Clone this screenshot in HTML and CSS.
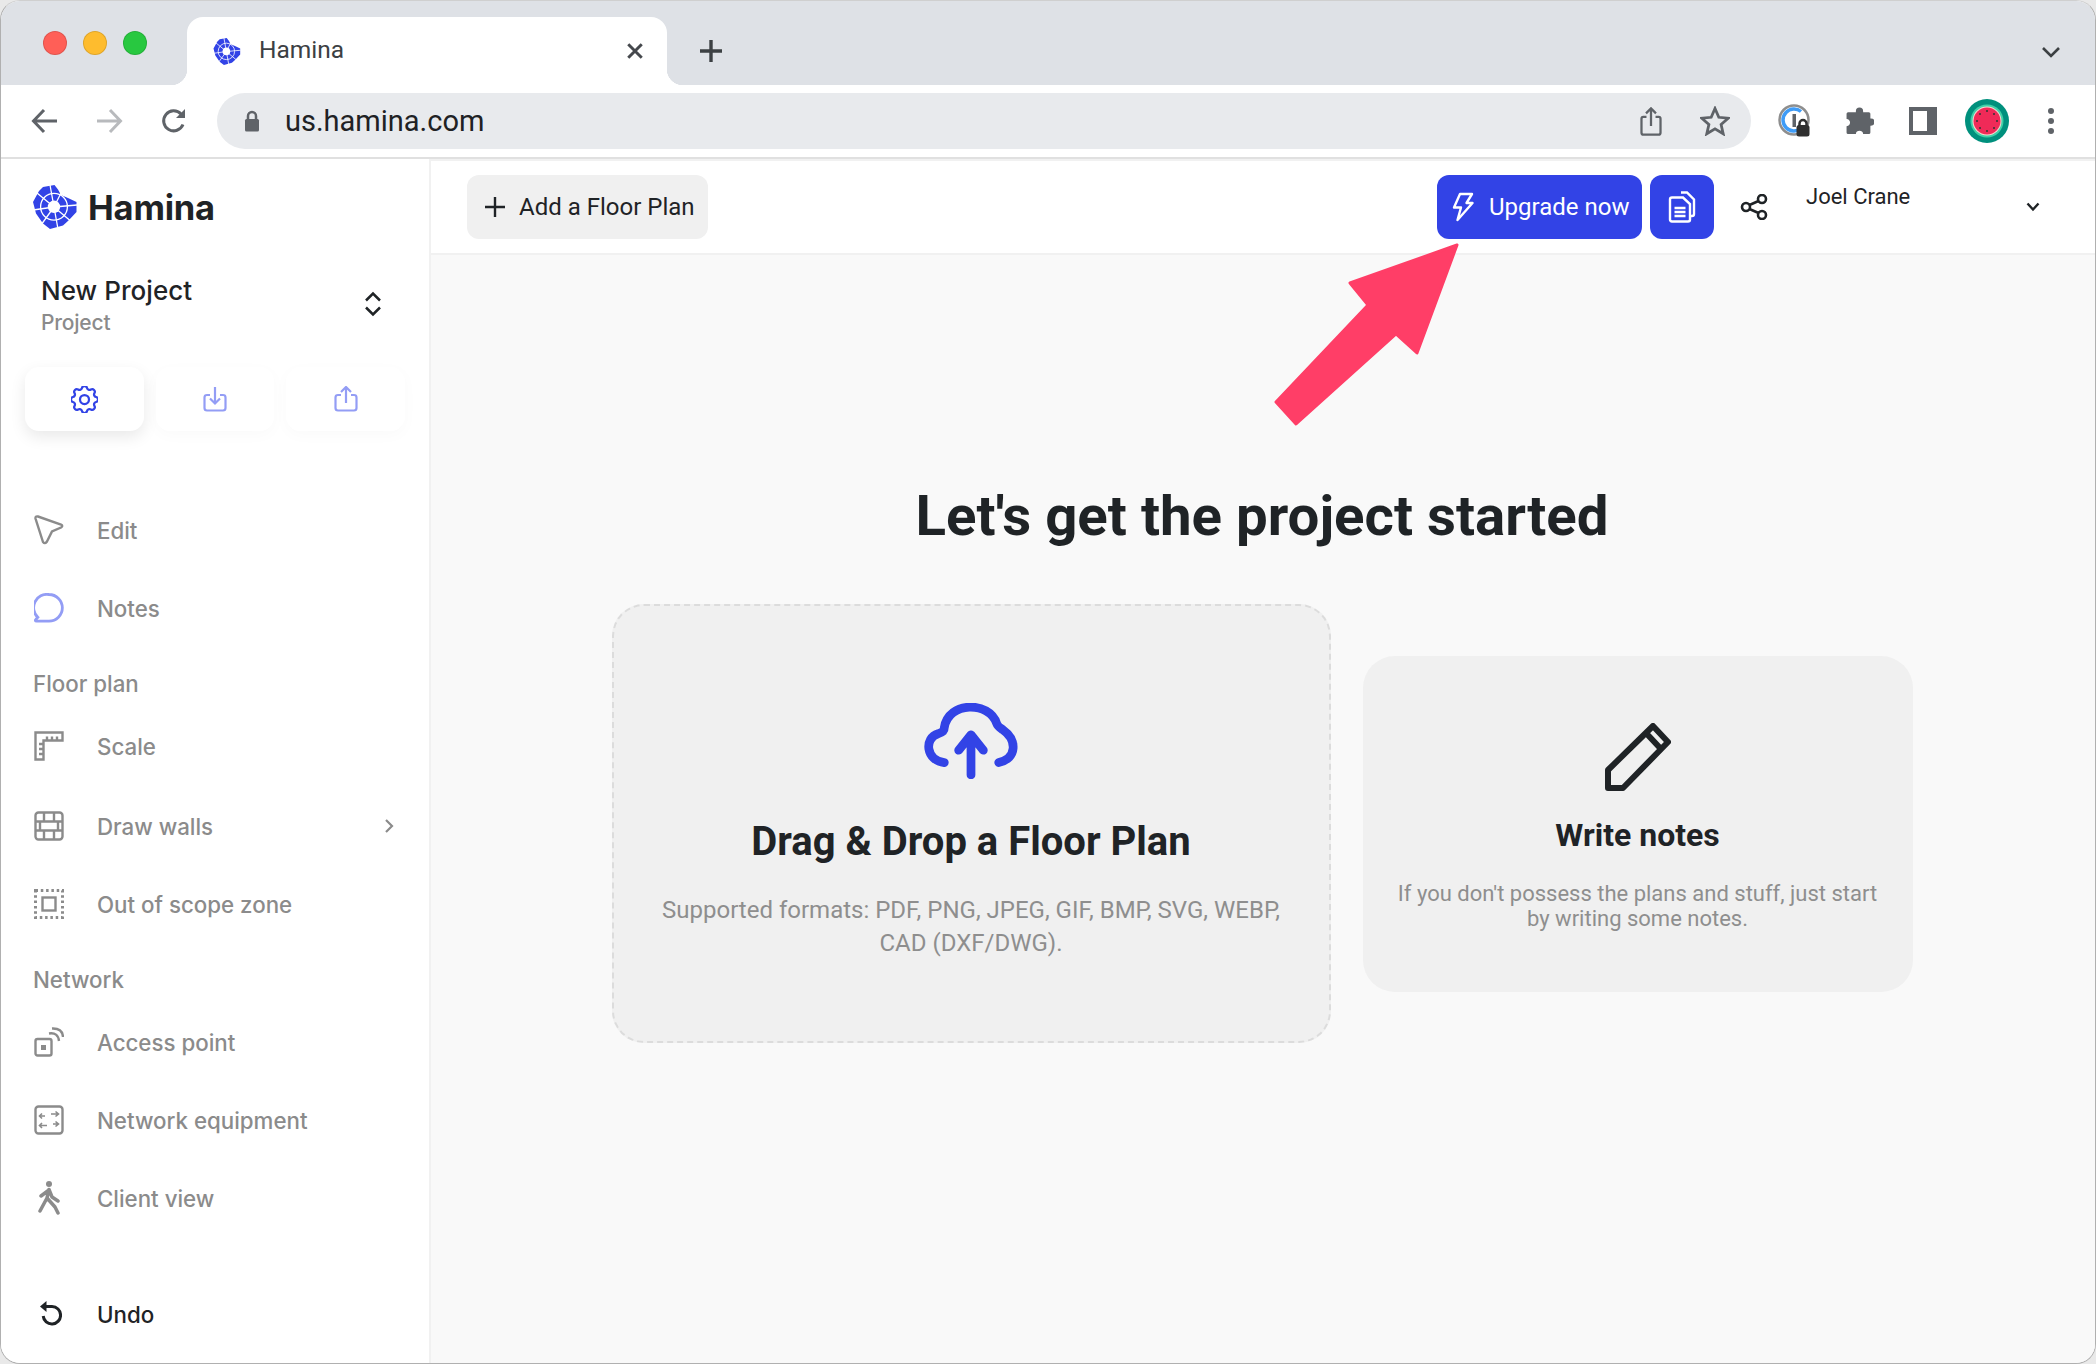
FILE: index.html
```html
<!DOCTYPE html>
<html lang="en">
<head>
<meta charset="utf-8">
<title>Hamina</title>
<link rel="stylesheet" href="styles.css">
</head>
<body>
<svg class="defs" width="0" height="0" aria-hidden="true">
  <symbol id="logo" viewBox="0 0 44 44">
    <path fill="#3243e6" d="M6 6 10 2 21.5 0 25 4.5 28 10 35 13 43.5 17 43.5 27 35.5 35.5 30 40.5 17 44 10 38.5 3 28.5 0 17Z"/>
    <g fill="none" stroke="#fff" stroke-width="1.3">
      <circle cx="21" cy="21.8" r="13.4"/>
      <path d="M21 22 17 0M21 22 4 8M21 22 0 25M21 22 8 40M21 22 25 44M21 22 40 38M21 22 44 20M21 22 30 4"/>
    </g>
    <circle cx="21" cy="21.8" r="6.2" fill="#fff"/>
  </symbol>
</svg>
<div class="window">
  <header class="tabstrip">
    <div class="lights"><i class="light red"></i><i class="light yellow"></i><i class="light green"></i></div>
    <div class="tab">
      <svg class="favicon"><use href="#logo"/></svg>
      <span class="tab-title">Hamina</span>
      <svg class="tab-close" viewBox="0 0 16 16"><path d="M2 2 14 14M14 2 2 14"/></svg>
    </div>
    <svg class="newtab" viewBox="0 0 24 24"><path d="M12 1V23M1 12H23"/></svg>
    <svg class="tablist" viewBox="0 0 20 12"><path d="M2 2 10 10 18 2"/></svg>
  </header>

  <div class="toolbar">
    <span class="tool"><svg class="i-chrome" viewBox="0 0 28 28"><path d="M26 14H3M13 3 2.500 14 13 25"/></svg></span>
    <span class="tool"><svg class="i-chrome faded" viewBox="0 0 28 28"><path d="M2 14H25M15 3 25.500 14 15 25"/></svg></span>
    <span class="tool tool-reload"><svg class="i-chrome" viewBox="0 0 28 28"><path d="M23 17.500A10 10 0 1 1 21 7"/><path class="solid" d="M25 2V11H16Z"/></svg></span>
    <div class="omnibox">
      <svg class="lock" viewBox="0 0 16 22"><path d="M1 10.500Q1 9 2.500 9H13.500Q15 9 15 10.500V20Q15 21.500 13.500 21.500H2.500Q1 21.500 1 20Z"/><path class="lock-loop" d="M4 10V6A4 4 0 0 1 12 6V10"/></svg>
      <span class="url">us.hamina.com</span>
      <span class="grow"></span>
      <span class="omni-tool"><svg class="i-share" viewBox="0 0 24 32"><path d="M7 11H3.500Q1.500 11 1.500 13V28Q1.500 30.500 3.500 30.500H20.500Q22.500 30.500 22.500 28V13Q22.500 11 20.500 11H17M12 21V2M6.500 7 12 1.500 17.500 7"/></svg></span>
      <span class="omni-tool"><svg class="i-star" viewBox="0 0 30 30"><path d="M15 2.500 18.800 11.300 28.200 12.200 21.100 18.500 23.200 27.800 15 22.900 6.800 27.800 8.900 18.500 1.800 12.200 11.200 11.300Z"/></svg></span>
    </div>
    <span class="tool ml"><svg class="i-onepass" viewBox="0 0 34 34">
      <circle class="op-out" cx="16" cy="16" r="14.500"/>
      <path class="op-blue" d="M23 7.500A11 11 0 1 0 23 24.500"/>
      <rect x="14.500" y="10" width="3.500" height="13" fill="#5f6368"/>
      <rect x="18.500" y="21" width="13" height="11.500" rx="2.500" fill="#2f2f2f"/>
      <path class="op-loop" d="M21.500 22V19.500A3.500 3.500 0 0 1 28.500 19.500V22"/>
    </svg></span>
    <span class="tool"><svg class="i-puzzle" viewBox="0 0 28 28"><path d="M10.500 5V4A3.500 3.500 0 0 1 17.500 4V5H23Q24.500 5 24.500 6.500V11H25A3.500 3.500 0 0 1 25 18H24.500V24.500Q24.500 26 23 26H17.500C17.500 22 10.500 22 10.500 26H3Q1.500 26 1.500 24.500V18.500C6 18.500 6 11.500 1.500 11.500V6.500Q1.500 5 3 5Z"/></svg></span>
    <span class="tool"><span class="i-panel"></span></span>
    <span class="tool"><svg class="i-avatar" viewBox="0 0 44 44">
      <circle cx="22" cy="22" r="22" fill="#00907d"/>
      <circle cx="22" cy="22" r="16.500" fill="#3fd0a8"/>
      <circle cx="22" cy="22" r="14.500" fill="#f5d9d0"/>
      <circle cx="22" cy="22" r="13.500" fill="#f02a58"/>
      <g fill="#333"><circle cx="22" cy="12" r="1"/><circle cx="22" cy="32" r="1"/><circle cx="12" cy="22" r="1"/><circle cx="32" cy="22" r="1"/><circle cx="15" cy="15" r="1"/><circle cx="29" cy="15" r="1"/><circle cx="15" cy="29" r="1"/><circle cx="29" cy="29" r="1"/></g>
    </svg></span>
    <span class="tool"><span class="i-dots"><i></i><i></i><i></i></span></span>
  </div>

  <div class="app">
    <aside class="sidebar">
      <div class="brand"><svg class="brand-logo"><use href="#logo"/></svg><span class="brand-name">Hamina</span></div>
      <div class="project">
        <div class="project-text">
          <div class="project-name">New Project</div>
          <div class="project-kind">Project</div>
        </div>
        <svg class="updown" viewBox="0 0 18 26"><path d="M2 9.500 9 2.500 16 9.500M2 16.500 9 23.500 16 16.500"/></svg>
      </div>
      <div class="actions">
        <button class="action active"><svg class="i-gear" viewBox="3 3 18 18"><path d="M10.325 4.317c.426-1.756 2.924-1.756 3.35 0a1.724 1.724 0 0 0 2.573 1.066c1.543-.94 3.31.826 2.37 2.37a1.724 1.724 0 0 0 1.065 2.572c1.756.426 1.756 2.924 0 3.35a1.724 1.724 0 0 0-1.066 2.573c.94 1.543-.826 3.31-2.37 2.37a1.724 1.724 0 0 0-2.572 1.065c-.426 1.756-2.924 1.756-3.35 0a1.724 1.724 0 0 0-2.573-1.066c-1.543.94-3.31-.826-2.37-2.37a1.724 1.724 0 0 0-1.065-2.572c-1.756-.426-1.756-2.924 0-3.35a1.724 1.724 0 0 0 1.066-2.573c-.94-1.543.826-3.31 2.37-2.37 1 .608 2.296.07 2.572-1.065z"/><circle cx="12" cy="12" r="3"/></svg></button>
        <button class="action"><svg class="i-tray" viewBox="0 0 24 26"><path d="M7 9H4Q1.500 9 1.500 11.500V22Q1.500 24.500 4 24.500H20Q22.500 24.500 22.500 22V11.500Q22.500 9 20 9H17M12 1V17M7 12.500 12 17.500 17 12.500"/></svg></button>
        <button class="action"><svg class="i-tray" viewBox="0 0 24 26"><path d="M7 9H4Q1.500 9 1.500 11.500V22Q1.500 24.500 4 24.500H20Q22.500 24.500 22.500 22V11.500Q22.500 9 20 9H17M12 17V1.500M7 6 12 1 17 6"/></svg></button>
      </div>
      <nav class="nav">
        <a class="item"><svg class="ico" viewBox="0 0 30 30"><path d="M1.500 3.500Q1.200 .8 4 1.500L27 9.500Q29.500 10.800 27 12.500L18 16.500 13 26.500Q11 29.500 9 27Z"/></svg><span>Edit</span></a>
        <a class="item"><svg class="ico ico-blue" viewBox="0 0 30 30"><path d="M15 1.500A13.300 13.300 0 1 1 15 28.200H2.500C1.300 28.200 1 27.300 1.800 26.500L3.800 24.300A13.300 13.300 0 0 1 15 1.500Z"/></svg><span>Notes</span></a>
        <div class="label">Floor plan</div>
        <a class="item"><svg class="ico" viewBox="0 0 30 30"><path d="M1.500 1.500H28.500V9.500H9.500V28.500H1.500ZM13 5.500V9.500M18 5.500V9.500M23 5.500V9.500M5 13H9.500M5 18H9.500M5 23H9.500"/></svg><span>Scale</span></a>
        <a class="item item-walls"><svg class="ico" viewBox="0 0 30 30"><rect x="1.500" y="1.500" width="27" height="27" rx="3"/><path d="M1.500 10.500H28.500M1.500 19.500H28.500M10 1.500V10.500M20 1.500V10.500M6 10.500V19.500M24 10.500V19.500M10 19.500V28.500M20 19.500V28.500"/></svg><span class="grow">Draw walls</span><svg class="chev" viewBox="0 0 10 16"><path d="M2 2 8 8 2 14"/></svg></a>
        <a class="item"><svg class="ico" viewBox="0 0 30 30"><rect class="dotted" x="1.500" y="1.500" width="27" height="27"/><rect x="8.500" y="8.500" width="13" height="13"/></svg><span>Out of scope zone</span></a>
        <div class="label">Network</div>
        <a class="item"><svg class="ico" viewBox="0 0 30 30"><rect x="1.500" y="12" width="16" height="16.500" rx="2"/><rect class="fillgray" x="7" y="18" width="5" height="5"/><path d="M15 6.500Q24 5 25 14M18 1.500Q28.500 1 29 10"/></svg><span>Access point</span></a>
        <a class="item"><svg class="ico" viewBox="0 0 30 30"><rect x="1.500" y="1.500" width="27" height="27" rx="3"/><path class="thin" d="M6 11H11M8 8.500 5.500 11 8 13.500M24 9H17M21.500 6.500 24.500 9 21.500 11.500M6 20.500H13M8 18 5.500 20.500 8 23M24 19H19M21.500 16.500 24.500 19 21.500 21.500"/></svg><span>Network equipment</span></a>
        <a class="item"><svg class="ico-walk" viewBox="0 0 22 34"><circle cx="11" cy="3" r="3"/><path d="M11 8.500 14 16 20 20M11 8.500 9 17 17 26 20 32M9 17 2 30M11 9 3 15"/></svg><span>Client view</span></a>
      </nav>
      <a class="item item-undo"><svg class="ico-undo" viewBox="0 0 22 26"><path d="M5 5.500H12A8.700 8.700 0 1 1 3.200 15"/><path class="solid-dark" d="M0 5.500 6.500 0V11Z"/></svg><span>Undo</span></a>
    </aside>

    <main class="main">
      <div class="topbar">
        <button class="add"><svg class="i-plus" viewBox="0 0 24 24"><path d="M12 2V22M2 12H22"/></svg>Add a Floor Plan</button>
        <span class="grow"></span>
        <button class="upgrade"><svg class="i-bolt" viewBox="0 0 22 30"><path d="M8 2H20L14.500 11H20.500L5.500 28 9 15.500H2Z"/></svg>Upgrade now</button>
        <button class="docs"><svg class="i-docs" viewBox="0 0 28 32"><path d="M13 1.500H19L26 8.500V23Q26 25 24 25H22"/><path d="M4 6.500H15L22 13V28.500Q22 30.500 20 30.500H4Q2 30.500 2 28.500V8.500Q2 6.500 4 6.500Z"/><path d="M6.500 17H17.500M6.500 21H17.500M6.500 25H17.500"/></svg></button>
        <svg class="i-link" viewBox="0 0 28 26"><circle cx="6" cy="13" r="4"/><circle cx="22" cy="5" r="4"/><circle cx="22" cy="21" r="4"/><path d="M9.500 11 18.500 7M9.500 15 18.500 19"/></svg>
        <div class="user">Joel Crane</div>
        <svg class="i-userchev" viewBox="0 0 14 10"><path d="M1.500 1.500 7 7.500 12.500 1.500"/></svg>
      </div>

      <section class="hero">
        <h1 class="headline">Let's get the project started</h1>
        <div class="cards">
          <div class="card card-drop">
            <svg class="i-cloud" viewBox="0 0 94 74"><path d="M21 58C3 56 1 34 15 30C20 28 21 27 21 24C25 -2 65 -2 72 20C73 23 75 24 78 26C92 36 92 54 74 58"/><path d="M47 70V32M35 46 47 31 59 46"/></svg>
            <h2 class="card-title-lg">Drag &amp; Drop a Floor Plan</h2>
            <p class="card-text-lg">Supported formats: PDF, PNG, JPEG, GIF, BMP, SVG, WEBP, CAD (DXF/DWG).</p>
          </div>
          <div class="card card-notes">
            <svg class="i-pencil" viewBox="0 0 66 68"><path d="M3 47 48 3 63 19 18 65H3ZM41 10 56 26"/></svg>
            <h2 class="card-title-sm">Write notes</h2>
            <p class="card-text-sm">If you don't possess the plans and stuff, just start by writing some notes.</p>
          </div>
        </div>
      </section>

      <svg class="pointer" viewBox="0 0 195 195"><path d="M187 7 80 45 98 67 6 164 26 186 126 96 147 115Z"/></svg>
    </main>
  </div>
</div>
</body>
</html>
```

FILE: styles.css
```css
* { box-sizing: border-box; }
html, body { margin: 0; height: 100%; }
body { background: #e9e9e9; font-family: "Roboto", "Liberation Sans", sans-serif; color: #1f2326; overflow: hidden; }
.defs { position: absolute; }
svg { display: block; flex: none; }
.grow { flex: 1; }
button { font: inherit; border: 0; padding: 0; cursor: pointer; }

.window { width: 2096px; height: 1364px; display: flex; flex-direction: column; border: 1px solid #b0b0b0; border-top-color: #cfcfcf; border-radius: 20px; overflow: hidden; background: #fff; }

/* Browser tab strip */
.tabstrip { height: 84px; flex: none; background: #dee1e6; display: flex; align-items: flex-start; padding: 16px 0 0 42px; }
.lights { display: flex; gap: 16px; margin-top: 14px; }
.light { width: 24px; height: 24px; border-radius: 50%; border: 1px solid rgba(0,0,0,.12); }
.red { background: #ff5f57; }
.yellow { background: #febc2e; }
.green { background: #28c840; }
.tab { position: relative; width: 480px; height: 68px; margin-left: 40px; background: #fff; border-radius: 16px 16px 0 0; display: flex; align-items: center; padding: 0 23px 0 26px; }
.tab::before, .tab::after { content: ""; position: absolute; bottom: 0; width: 16px; height: 16px; }
.tab::before { left: -16px; background: radial-gradient(circle at 0 0, transparent 16px, #fff 16.5px); }
.tab::after { right: -16px; background: radial-gradient(circle at 100% 0, transparent 16px, #fff 16.5px); }
.favicon { width: 28px; height: 27px; }
.tab-title { font-size: 24.500px; line-height: 28px; margin-top: -2px; color: #3c4043; margin-left: 18px; flex: 1; }
.tab-close { width: 18px; height: 18px; fill: none; stroke: #45484d; stroke-width: 2.600; }
.newtab { width: 24px; height: 24px; margin: 22px 0 0 32px; fill: none; stroke: #3c4043; stroke-width: 3.400; }
.tablist { width: 20px; height: 12px; margin: 29px 34px 0 auto; fill: none; stroke: #3c4043; stroke-width: 2.600; }

/* Browser toolbar */
.toolbar { height: 74px; flex: none; background: #fff; display: flex; align-items: center; padding: 0 12px; border-bottom: 2px solid #e0e0e0; }
.tool { width: 64px; height: 56px; flex: none; display: flex; align-items: center; justify-content: center; }
.tool.ml { margin-left: 12px; }
.tool-reload { padding-left: 2px; }
.i-chrome { width: 28px; height: 28px; fill: none; stroke: #5f6368; stroke-width: 3; }
.i-chrome.faded { stroke: #b8babd; }
.i-chrome .solid { fill: #5f6368; stroke: none; }
.omnibox { flex: 1; height: 56px; background: #e8eaed; border-radius: 28px; display: flex; align-items: center; padding: 0 4px 0 27px; margin-left: 12px; }
.lock { width: 16px; height: 22px; }
.lock path { fill: #5f6368; }
.lock .lock-loop { fill: none; stroke: #5f6368; stroke-width: 2.500; }
.url { font-size: 29px; color: #202124; margin-left: 25px; }
.omni-tool { width: 64px; display: flex; justify-content: center; }
.i-share { width: 22px; height: 29px; fill: none; stroke: #5f6368; stroke-width: 2.500; }
.i-star { width: 30px; height: 30px; fill: none; stroke: #5f6368; stroke-width: 2.800; }
.i-onepass { width: 34px; height: 34px; }
.op-out { fill: none; stroke: #8e8e8e; stroke-width: 2.500; }
.op-blue { fill: none; stroke: #3f9cf7; stroke-width: 3.500; }
.op-loop { fill: none; stroke: #2f2f2f; stroke-width: 2.500; }
.i-puzzle { width: 29px; height: 29px; fill: #5f6368; }
.i-panel { width: 28px; height: 28px; border: 4px solid #5f6368; border-right-width: 10px; }
.i-avatar { width: 44px; height: 44px; }
.i-dots { display: flex; flex-direction: column; gap: 4px; }
.i-dots i { width: 6px; height: 6px; border-radius: 50%; background: #5f6368; }

/* App */
.app { flex: 1; display: flex; min-height: 0; }

.sidebar { width: 430px; flex: none; background: #fff; border-right: 2px solid #f1f1f1; display: flex; flex-direction: column; font-family: "Inter", "Liberation Sans", sans-serif; padding-bottom: 10px; }
.brand { display: flex; align-items: center; padding: 26px 0 0 32px; height: 70px; }
.brand-logo { width: 44px; height: 44px; }
.brand-name { margin-left: 11px; font-size: 34.500px; font-weight: 700; letter-spacing: -.2px; color: #1f2326; }
.project { display: flex; align-items: center; justify-content: space-between; padding: 0 47px 0 40px; margin-top: 41px; height: 72px; }
.project-name { font-size: 26px; font-weight: 500; line-height: 34px; letter-spacing: .05px; }
.project-kind { font-size: 21px; line-height: 30px; color: #8b8b8b; font-weight: 500; letter-spacing: -.2px; }
.updown { width: 18px; height: 26px; margin-top: -4px; fill: none; stroke: #1f2326; stroke-width: 2.500; }
.actions { display: flex; gap: 12px; padding: 0 24px; margin-top: 25px; }
.action { width: 119px; height: 64px; background: #fff; border-radius: 14px; display: flex; align-items: center; justify-content: center; box-shadow: 0 4px 16px rgba(0,0,0,.025); }
.action.active { box-shadow: 0 6px 16px rgba(0,0,0,.09); }
.i-gear { width: 27px; height: 27px; fill: none; stroke: #3243e6; stroke-width: 1.500; }
.i-tray { width: 24px; height: 26px; fill: none; stroke: #939df5; stroke-width: 2.200; }
.nav { margin-top: 60px; }
.item { height: 78px; display: flex; align-items: center; padding: 0 35px 0 33px; font-size: 22.300px; font-weight: 500; color: #8b8b8b; }
.item > svg:first-child { margin-right: 33px; }
.item-walls { margin-top: 2px; }
.ico { width: 30px; height: 30px; fill: none; stroke: #8b8b8b; stroke-width: 2.400; }
.ico-blue { stroke: #939df5; stroke-width: 2.800; }
.ico .dotted { stroke-dasharray: 2.500 2.800; stroke-width: 3; }
.ico .fillgray { fill: #8b8b8b; stroke: none; }
.ico .thin { stroke-width: 1.600; }
.ico-walk { width: 22px; height: 34px; margin-left: 4px; margin-right: 37px !important; fill: none; stroke: #8b8b8b; stroke-width: 3.500; stroke-linejoin: round; stroke-linecap: round; }
.ico-walk circle { fill: #8b8b8b; stroke: none; }
.chev { width: 10px; height: 16px; fill: none; stroke: #8b8b8b; stroke-width: 2.200; }
.label { height: 60px; padding: 25px 0 0 32px; font-size: 22.300px; font-weight: 500; line-height: 24px; color: #8b8b8b; }
.item-undo { margin-top: auto; color: #1f2326; }
.ico-undo { width: 22px; height: 26px; margin-left: 6px; margin-right: 35px !important; fill: none; stroke: #1f2326; stroke-width: 3; }
.ico-undo .solid-dark { fill: #1f2326; stroke: none; }

.main { flex: 1; position: relative; background: #f9f9f9; display: flex; flex-direction: column; min-width: 0; }
.topbar { height: 96px; flex: none; background: #fff; border-top: 2px solid #f1f1f1; border-bottom: 2px solid #f1f1f1; display: flex; align-items: center; padding: 0 55px 0 36px; font-size: 24px; }
.add { width: 241px; height: 64px; border-radius: 12px; background: #f0f0f0; color: #1f2326; display: flex; align-items: center; padding-left: 16px; font-size: 24px; }
.i-plus { width: 24px; height: 24px; margin-right: 12px; fill: none; stroke: #1f2326; stroke-width: 2.400; }
.upgrade { width: 205px; height: 64px; border-radius: 12px; background: #3243e6; color: #fff; display: flex; align-items: center; padding-left: 15px; font-size: 24px; }
.i-bolt { width: 22px; height: 30px; margin-right: 15px; fill: none; stroke: #fff; stroke-width: 2.400; stroke-linejoin: round; }
.docs { width: 64px; height: 64px; margin-left: 8px; border-radius: 12px; background: #3243e6; display: flex; align-items: center; justify-content: center; }
.i-docs { width: 28px; height: 32px; fill: none; stroke: #fff; stroke-width: 2.400; }
.i-link { width: 28px; height: 26px; margin-left: 26px; fill: none; stroke: #1f2326; stroke-width: 2.600; }
.user { width: 220px; margin-left: 38px; font-size: 22px; color: #1f2326; align-self: flex-start; padding-top: 22px; line-height: 28px; }
.i-userchev { width: 14px; height: 10px; fill: none; stroke: #1f2326; stroke-width: 2.400; }

.hero { display: flex; flex-direction: column; align-items: center; padding: 229px 2px 0 0; }
.headline { margin: 0; font-size: 56.400px; line-height: 64px; font-weight: 700; color: #1f2326; }
.cards { margin-top: 56px; display: flex; align-items: center; gap: 32px; }
.card { background: #f0f0f0; border-radius: 32px; display: flex; flex-direction: column; align-items: center; text-align: center; }
.card-drop { width: 719px; height: 439px; border: 2px dashed #dcdcdc; padding-top: 97px; }
.i-cloud { width: 98px; height: 76px; fill: none; stroke: #3243e6; stroke-width: 8.500; stroke-linecap: round; stroke-linejoin: round; }
.card-title-lg { margin: 37px 0 0; font-size: 40px; line-height: 52px; font-weight: 700; }
.card-text-lg { margin: 26px 0 0; width: 640px; font-size: 24px; line-height: 33px; color: #8e8e8e; }
.card-notes { width: 550px; height: 336px; padding-top: 67px; }
.i-pencil { width: 66px; height: 68px; fill: none; stroke: #1f2326; stroke-width: 6; stroke-linejoin: round; }
.card-title-sm { margin: 22px 0 0; font-size: 32px; line-height: 44px; font-weight: 700; }
.card-text-sm { margin: 24px 0 0; width: 490px; font-size: 22px; line-height: 25px; color: #8e8e8e; }

.pointer { position: absolute; left: 839px; top: 79px; width: 195px; height: 195px; fill: #ff3e67; stroke: #ff3e67; stroke-width: 3; stroke-linejoin: round; }
```
